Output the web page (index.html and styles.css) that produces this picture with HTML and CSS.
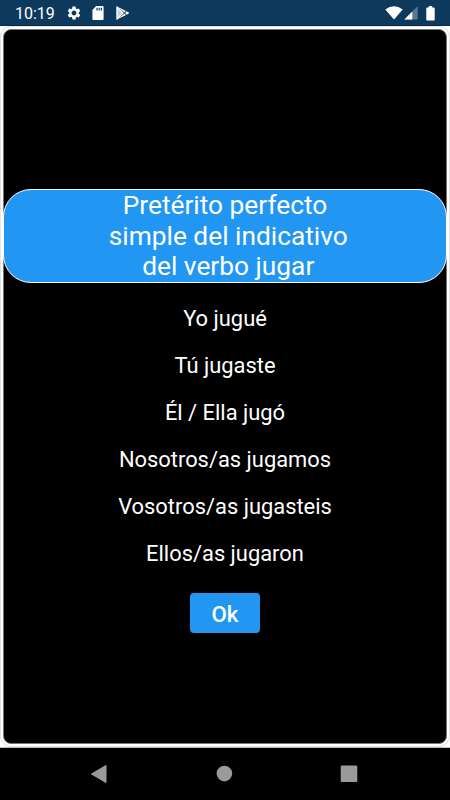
FILE: index.html
```html
<!DOCTYPE html>
<html lang="es">
<head>
  <meta charset="utf-8">
  <title>Verbo jugar</title>
  <link rel="stylesheet" href="styles.css">
</head>

<body>

<div class="status-bar">
  <span class="time">10:19</span>
  <svg class="icon-settings" width="16" height="16" viewBox="0 0 24 24"><path fill="#fff" d="M19.14 12.94c.04-.3.06-.61.06-.94s-.02-.64-.07-.94l2.03-1.58c.18-.14.23-.41.12-.61l-1.92-3.32c-.12-.22-.37-.29-.59-.22l-2.39.96c-.5-.38-1.03-.7-1.62-.94l-.36-2.54c-.04-.24-.24-.41-.48-.41h-3.84c-.24 0-.43.17-.47.41l-.36 2.54c-.59.24-1.13.57-1.62.94l-2.39-.96c-.22-.08-.47 0-.59.22L2.74 8.87c-.12.21-.08.47.12.61l2.03 1.58c-.05.3-.09.63-.09.94s.02.64.07.94l-2.03 1.58c-.18.14-.23.41-.12.61l1.92 3.32c.12.22.37.29.59.22l2.39-.96c.5.38 1.03.7 1.62.94l.36 2.54c.05.24.24.41.48.41h3.84c.24 0 .44-.17.47-.41l.36-2.54c.59-.24 1.13-.56 1.62-.94l2.39.96c.22.08.47 0 .59-.22l1.92-3.32c.12-.22.07-.47-.12-.61l-2.01-1.58zM12 15.6c-1.98 0-3.6-1.62-3.6-3.6s1.62-3.6 3.6-3.6 3.6 1.62 3.6 3.6-1.62 3.6-3.6 3.6z"/></svg>
  <svg class="icon-card" width="12" height="14" viewBox="0 0 12 14"><path fill="#fff" fill-rule="evenodd" d="M4.2 0H10.6Q11.6 0 11.6 1V13Q11.6 14 10.6 14H1.4Q.4 14 .4 13V4ZM4.4 1.8V4.4H5.6V1.8ZM6.6 1.8V4.4H7.8V1.8ZM8.8 1.8V4.4H10V1.8Z"/></svg>
  <svg class="icon-play" width="14" height="14" viewBox="0 0 14 14"><path fill="#c3d0db" d="M1 1L7 7L1 13Z"/><path fill="none" stroke="#fff" stroke-width="1.4" stroke-linejoin="round" d="M1 1V13L7 7Z"/><path fill="#fff" d="M1 .4L10 5L8.6 6.5ZM1 13.6L10 9L8.6 7.5ZM10.8 5.3L13.4 7L10.8 8.7L9.2 7Z"/></svg>
  <div class="status-right">
    <svg width="18" height="14" viewBox="0 0 18 14"><path fill="#fff" d="M.3 3.6Q9-3.2 17.7 3.6L9 13.6Z"/></svg>
    <svg class="icon-signal" width="14" height="14" viewBox="0 0 14 14"><path fill="#587992" d="M13.7.2V13.6H.3Z"/><path fill="#fff" d="M8.3 5.6V13.6H.3Z"/></svg>
    <svg class="icon-battery" width="9" height="15" viewBox="0 0 9 15"><path fill="#fff" d="M2.8 0H6.2V1.6H8Q8.7 1.6 8.7 2.3V13.8Q8.7 14.5 8 14.5H1Q.3 14.5 .3 13.8V2.3Q.3 1.6 1 1.6H2.8Z"/></svg>
  </div>
</div>

<div class="screen">
  <div class="card">
    <h1 class="title">Pretérito perfecto<br>&nbsp;simple del indicativo<br>&nbsp;del verbo jugar</h1>
    <ul class="verbs">
      <li>Yo jugué</li>
      <li>Tú jugaste</li>
      <li>Él / Ella jugó</li>
      <li>Nosotros/as jugamos</li>
      <li>Vosotros/as jugasteis</li>
      <li>Ellos/as jugaron</li>
    </ul>
    <button type="button" class="ok">Ok</button>
  </div>
</div>

<div class="nav-bar">
  <svg width="18" height="20" viewBox="0 0 18 20"><path fill="#9a9a9a" d="M15.4 1.3Q16.5.7 16.5 1.8V18.2Q16.5 19.3 15.4 18.7L1.4 10.6Q.6 10 1.4 9.4Z"/></svg>
  <svg width="18" height="18" viewBox="0 0 18 18"><circle cx="9.4" cy="8.6" r="7.8" fill="#9a9a9a"/></svg>
  <svg width="18" height="18" viewBox="0 0 18 18"><rect x=".7" y=".5" width="16.6" height="16.6" rx="1.2" fill="#9a9a9a"/></svg>
</div>

</body>
</html>
```

FILE: styles.css
```css
body {
  margin: 0;
  height: 800px;
  display: flex;
  flex-direction: column;
  font-family: Roboto, "Liberation Sans", sans-serif;
  background-color: black;
  color: white;
}

svg {
  display: block;
}

.status-bar {
  height: 26px;
  padding: 0 15px;
  box-sizing: border-box;
  display: flex;
  align-items: center;
  background-color: #0d395c;
  border-bottom: 1px solid #06294f;
}

.time {
  width: 51px;
  font-size: 16px;
  line-height: 25px;
  padding-top: 2px;
}

.icon-settings {
  margin-top: 1px;
}

.icon-card {
  margin: 1px 0 0 10px;
}

.icon-play {
  margin: 1px 0 0 12px;
}

.status-right {
  display: flex;
  align-items: center;
  margin: 1px 0 0 auto;
}

.icon-signal {
  margin-left: 1px;
}

.icon-battery {
  margin-left: 8px;
}

.screen {
  height: 722px;
  padding: 3px 3px 4px;
  box-sizing: border-box;
  background-color: white;
  border-bottom: 1px solid #bbb;
}

.card {
  height: 715px;
  box-sizing: border-box;
  display: flex;
  flex-direction: column;
  align-items: center;
  padding-top: 159px;
  border: 1px solid #777;
  border-radius: 8px;
  background-color: black;
  box-shadow: 0 0 0 2px white, 0 0 0 3px #e4e4e4;
}

.title {
  width: 444px;
  height: 94px;
  margin: 0;
  box-sizing: border-box;
  border: 1px solid white;
  border-radius: 28px;
  background-color: #2196f3;
  font-size: 26.3px;
  font-weight: normal;
  line-height: 30.7px;
  text-align: center;
}

.verbs {
  list-style: none;
  margin: 12px 0 16px;
  padding: 0;
  font-size: 21.9px;
  line-height: 47px;
  text-align: center;
}

.ok {
  width: 70px;
  height: 40px;
  border: none;
  border-radius: 4px;
  background-color: #2196f3;
  color: white;
  font: 500 22.3px Roboto, "Liberation Sans", sans-serif;
  padding-top: 3px;
}

.nav-bar {
  height: 52px;
  padding: 0 92px 0 90px;
  display: flex;
  align-items: center;
  justify-content: space-between;
}
```
